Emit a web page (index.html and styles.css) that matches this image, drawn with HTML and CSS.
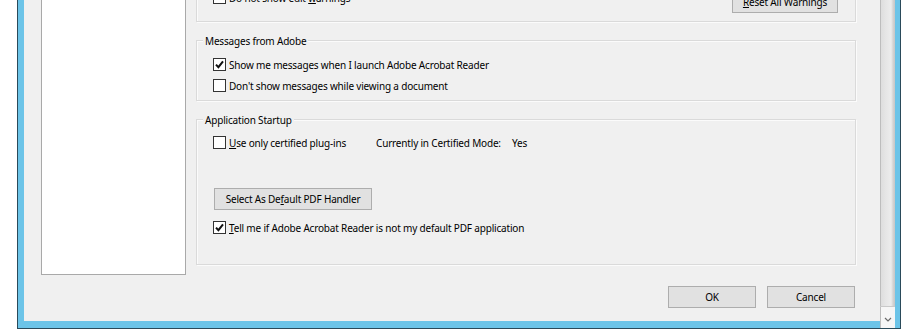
FILE: index.html
```html
<!DOCTYPE html>
<html>
<head>
<meta charset="utf-8">
<link rel="stylesheet" href="styles.css">
</head>
<body>
<div class="window">
  <div class="client">
    <div class="main">
      <div class="list"></div>
      <div class="panel">
        <div class="group group-top">
          <div class="check">
            <span class="box"></span>
            <span>Do not show edit <u>w</u>arnings</span>
          </div>
          <button class="btn btn-reset"><u>R</u>eset All Warnings</button>
        </div>

        <div class="group group-msgs">
          <div class="legend">Messages from Adobe</div>
          <div class="rows rows-msgs">
            <div class="check">
              <span class="box checked"><svg viewBox="0 0 11 11" width="11" height="11"><path d="M2 5.6 L4.4 8.2 L9 2.4" fill="none" stroke="#111" stroke-width="2"/></svg></span>
              <span>Show me messages when I launch Adobe Acrobat Reader</span>
            </div>
            <div class="check">
              <span class="box"></span>
              <span>Don't show messages while viewing a document</span>
            </div>
          </div>
        </div>

        <div class="group group-startup">
          <div class="legend">Application Startup</div>
          <div class="rows rows-startup">
            <div class="check-line">
              <div class="check check-cert">
                <span class="box"></span>
                <span><u>U</u>se only certified plug-ins</span>
              </div>
              <span class="mode-label">Currently in Certified Mode:</span>
              <span>Yes</span>
            </div>
            <button class="btn btn-default">Select As De<u>f</u>ault PDF Handler</button>
            <div class="check check-tell">
              <span class="box checked"><svg viewBox="0 0 11 11" width="11" height="11"><path d="M2 5.6 L4.4 8.2 L9 2.4" fill="none" stroke="#111" stroke-width="2"/></svg></span>
              <span><u>T</u>ell me if Adobe Acrobat Reader is not my default PDF application</span>
            </div>
          </div>
        </div>
      </div>
    </div>
    <div class="footer">
      <button class="btn btn-footer">OK</button>
      <button class="btn btn-footer">Cancel</button>
    </div>
  </div>
  <div class="scroll">
    <div class="track"></div>
    <div class="arrow"><svg viewBox="0 0 8 5" width="8" height="5"><path d="M1 1 L4 4 L7 1" fill="none" stroke="#6a6a6a" stroke-width="1.2"/></svg></div>
  </div>
</div>
</body>
</html>
```

FILE: styles.css
```css
* { box-sizing: border-box; }

html, body {
  margin: 0;
  padding: 0;
  background: #ffffff;
  overflow: hidden;
}

body {
  font-family: "Noto Sans", "Open Sans", sans-serif;
  font-size: 10px;
  letter-spacing: -0.18px;
  color: #000;
}

.window {
  margin-left: 17px;
  width: 884px;
  height: 329px;
  background: #6cc4e8;
  border-left: 1px solid #2a4a5a;
  border-right: 1px solid #2a4a5a;
  border-bottom: 1px solid #2a4a5a;
  padding-left: 6px;
  padding-right: 5px;
  display: flex;
  align-items: stretch;
}

.client {
  width: 856px;
  margin-bottom: 7px;
  background: #f0f0f0;
  display: flex;
  flex-direction: column;
}

.main {
  display: flex;
  height: 275px;
}

.list {
  margin-left: 17px;
  width: 145px;
  height: 275px;
  background: #ffffff;
  border: 1px solid #a9a9a9;
  border-top: none;
}

.panel {
  margin-left: 10px;
  width: 660px;
  display: flex;
  flex-direction: column;
}

.group {
  border: 1px solid #dadada;
  box-shadow: inset 1px 1px 0 #fbfbfb, 1px 1px 0 #fbfbfb;
}

.group-top {
  margin-top: -30px;
  height: 52px;
  border-top: none;
  padding: 17px 17px 0 16px;
  display: flex;
  justify-content: space-between;
  align-items: flex-start;
}

.group-msgs {
  margin-top: 18px;
  height: 61px;
}

.group-startup {
  margin-top: 18px;
  height: 146px;
}

.legend {
  margin: -7px 0 0 6px;
  padding: 0 2px;
  width: fit-content;
  line-height: 14px;
  height: 14px;
  background: #f0f0f0;
  white-space: nowrap;
}

.rows {
  padding-left: 16px;
  display: flex;
  flex-direction: column;
  align-items: flex-start;
}

.rows-msgs { margin-top: 6px; }
.rows-startup { margin-top: 5px; }

.check {
  display: flex;
  align-items: center;
  height: 21px;
  white-space: nowrap;
}

.box {
  width: 13px;
  height: 13px;
  border: 1px solid #333333;
  background: #ffffff;
  margin-right: 3px;
  display: flex;
  align-items: center;
  justify-content: center;
  flex: none;
}

.box svg { display: block; }

.check-line {
  display: flex;
  align-items: center;
  height: 21px;
  white-space: nowrap;
}

.check-cert { width: 163px; }

.mode-label { width: 136px; flex: none; }

.btn {
  font-family: inherit;
  font-size: 10px;
  letter-spacing: -0.18px;
  color: #000;
  background: #e1e1e1;
  border: 1px solid #adadad;
  height: 22px;
  padding: 0;
  line-height: 20px;
  text-align: center;
  white-space: nowrap;
}

.btn-reset {
  width: 106px;
  margin-top: 4px;
}

.btn-default {
  width: 158px;
  margin-top: 35px;
  margin-left: 1px;
}

.check-tell { margin-top: 7px; }

.footer {
  display: flex;
  justify-content: flex-end;
  gap: 11px;
  padding-right: 25px;
  margin-top: 11px;
}

.btn-footer { width: 88px; }

.scroll {
  width: 15px;
  display: flex;
  flex-direction: column;
}

.track {
  flex: 1;
  background: linear-gradient(to right, #bdbdbd 0, #bdbdbd 1px, #dedede 1px, #e6e6e6 6px, #ececec 11px, #d4d4d4 13px, #c6c6c6 15px);
  border-bottom: 1px solid #c9c9c9;
}

.arrow {
  height: 21px;
  background: #f6f6f6;
  border-left: 1px solid #bdbdbd;
  display: flex;
  align-items: center;
  justify-content: center;
  padding-top: 3px;
}

.arrow svg { display: block; }
```
